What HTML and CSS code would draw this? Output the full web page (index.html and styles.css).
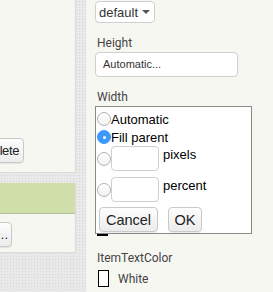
FILE: index.html
```html
<!DOCTYPE html>
<html lang="en">
<head>
    <meta charset="UTF-8">
    <title>Properties</title>
    <link rel="stylesheet" href="styles.css">
</head>
<body>
    <div class="page">
        <div class="left">
            <div class="panel panel-top">
                <button class="btn btn-delete">Delete</button>
            </div>
            <div class="panel panel-bottom">
                <div class="panel-head"></div>
                <div class="panel-body">
                    <button class="btn btn-more">...</button>
                </div>
            </div>
        </div>

        <div class="props">
            <div class="select">default <span class="caret"></span></div>

            <div class="label">Height</div>
            <div class="input">Automatic...</div>

            <div class="label label-width">Width</div>
            <div class="popup">
                <label class="opt"><span class="radio"></span>Automatic</label>
                <label class="opt"><span class="radio checked"></span>Fill parent</label>
                <label class="opt opt-box"><span class="radio"></span><span class="num"></span><span class="unit">pixels</span></label>
                <label class="opt opt-box"><span class="radio"></span><span class="num"></span><span class="unit">percent</span></label>
                <div class="actions">
                    <button class="btn btn-dlg btn-cancel">Cancel</button>
                    <button class="btn btn-dlg btn-ok">OK</button>
                </div>
            </div>
            <div class="hidden-swatch"></div>

            <div class="label label-color">ItemTextColor</div>
            <div class="color">
                <span class="swatch"></span>White
            </div>
        </div>
    </div>
</body>
</html>
```

FILE: styles.css
```css
:root {
    --paper: #f7f7f2;
    --dots: #e9e9e9;
    --green: #d0dfaa;
}
body {
    margin: 0; width: 273px; height: 292px; overflow: hidden;
    font-family: "Liberation Sans", Arial, sans-serif; color: #000;
    background: var(--paper);
}
.page { display: flex; height: 292px; }

/* left column: two panels on a dotted backdrop */
.left {
    width: 76px; padding-right: 10px; flex-shrink: 0;
    background-color: var(--dots);
    background-image: radial-gradient(#d6d6d6 0.7px, transparent 0.9px);
    background-size: 3px 3px;
    display: flex; flex-direction: column;
}
.panel { background: var(--paper); border-right: 1px solid #dcdcdc; border-bottom: 1px solid #dcdcdc; overflow: hidden; }
.panel-top { height: 172px; display: flex; flex-direction: column; justify-content: flex-end; }
.panel-bottom { margin-top: 10px; height: 69px; }
.panel-head { height: 30px; background: var(--green); border-bottom: 1px solid #b7c39a; }
.panel-body { padding-top: 8px; }

.btn {
    font-family: "Liberation Sans", Arial, sans-serif; color: #222;
    background: linear-gradient(#fdfdfd, #ececec);
    border: 1px solid #c9c9c9; border-radius: 4px;
    box-shadow: 0 1px 1px rgba(0,0,0,0.08);
    padding: 0; cursor: pointer;
}
.btn-delete { width: 52px; height: 25px; margin: 0 0 9px -28px; font-size: 13px; letter-spacing: -0.4px; text-align: right; padding-right: 4px; }
.btn-more { width: 30px; height: 25px; margin-left: -18px; font-size: 13px; text-align: right; padding-right: 3px; }

/* right column: property editors */
.props { flex: 1; padding-left: 9px; }
.select {
    display: inline-flex; align-items: center; gap: 4px;
    margin-top: 1px; height: 20px; padding: 0 4px 0 3px;
    border: 1px solid #cfcfcf; border-radius: 4px; background: #fff;
    font-size: 13px; color: #333;
}
.caret { border-left: 4px solid transparent; border-right: 4px solid transparent; border-top: 4px solid #555; }

.label { font-family: Roboto, sans-serif; font-size: 12px; color: #444; margin: 12px 0 0 2px; line-height: 16px; }
.input {
    width: 134px; height: 23px; margin-top: 1px; padding-left: 7px;
    border: 1px solid #cfcfcf; border-radius: 4px; background: #fff;
    font-size: 11px; color: #333; line-height: 23px;
}
.label-width { margin-top: 12px; }

.popup {
    width: 154px; margin-top: 1px;
    border: 1px solid #8a8a8a; background: #fff;
    padding: 3px 0 1px 1px;
}
.opt { display: flex; align-items: center; height: 18px; font-size: 13px; }
.radio {
    width: 12px; height: 12px; border-radius: 50%; flex-shrink: 0;
    border: 1px solid #b3b3b3; background: linear-gradient(#fff, #f1f1f1);
}
.radio.checked { background: #3b99fc; border-color: #3b99fc; position: relative; }
.radio.checked::after { content: ""; position: absolute; left: 4.5px; top: 4.5px; width: 3px; height: 3px; border-radius: 50%; background: #fff; }
.opt-box { height: 31px; align-items: flex-start; }
.opt-box .radio { align-self: center; margin-top: -6px; }
.num {
    width: 46px; height: 23px; border: 1px solid #cfcfcf; border-radius: 4px;
    margin-right: 4px; flex-shrink: 0;
}
.unit { line-height: 17px; }
.actions { display: flex; gap: 10px; padding-left: 2px; margin-top: -1px; }
.btn-dlg { height: 25px; font-size: 14.5px; padding: 0; }
.btn-cancel { width: 59px; }
.btn-ok { width: 34px; }

.hidden-swatch { width: 11px; height: 0; border-top: 2px solid #000; margin-left: 2px; }
.label-color { margin-top: 14px; }
.color { display: flex; align-items: center; gap: 9px; margin: 4px 0 0 3px; font-family: Roboto, sans-serif; font-size: 12px; color: #444; }
.swatch { width: 9px; height: 15px; border: 1px solid #000; background: #fff; }
```
